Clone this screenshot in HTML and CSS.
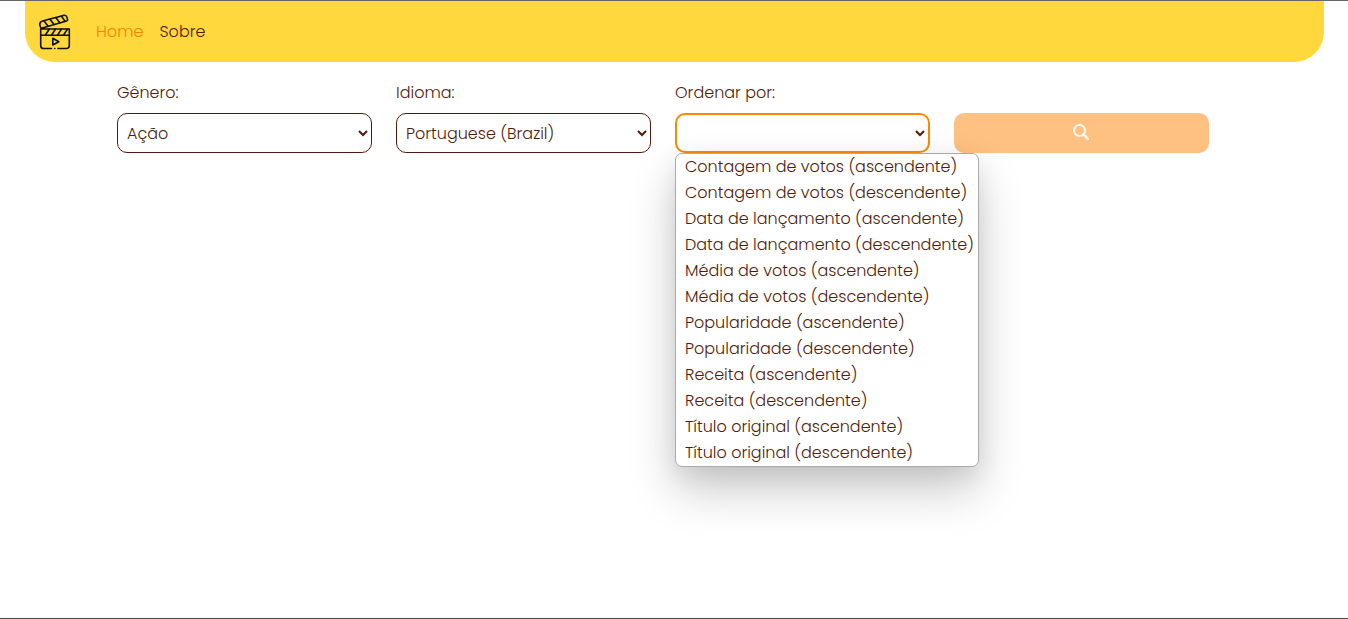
FILE: index.html
```html
<!DOCTYPE html>
<html lang="pt-BR">
<head>
  <meta charset="utf-8">
  <meta name="viewport" content="width=device-width, initial-scale=1">
  <title>Filmes</title>
  <link rel="stylesheet" href="styles.css">
</head>
<body>
  <header class="navbar">
    <a class="brand" href="#" aria-label="Início">
      <svg class="brand-icon" viewBox="0 0 34 36" fill="none" stroke="currentColor" stroke-width="1.6" stroke-linecap="round" stroke-linejoin="round">
        <path d="M3.6 14.2Q2.3 13.6 1.9 11.4 1.3 8 4.4 7L25.5 1.4Q28.3.9 29 3.4L29.5 5.3Q29.8 6.6 28.5 7.1L3.6 14.2M2.7 15V31.4Q2.7 34.5 5.8 34.5H13.5M20 34.5H28.3Q31.3 34.5 31.3 31.5V15H2.7M2.7 21.2H31.3"/>
        <path d="M6 6.8 10 12.2M12 5.2 16 10.5M17.8 3.6 21.8 8.8M23.4 2.1 27 7.3M11.2 15.2 7.4 21M17.4 15.2 13.6 21M23.4 15.2 19.6 21M29.4 15.2 25.6 21"/>
        <path d="M14.8 24.3V31L20.8 27.7ZM16.7 34.5H16.8"/>
      </svg>
    </a>
    <nav class="nav">
      <a class="nav-link active" href="#" aria-current="page">Home</a>
      <a class="nav-link" href="#">Sobre</a>
    </nav>
  </header>

  <main>
    <form class="filters">
      <div class="field">
        <label for="genero">Gênero:</label>
        <select id="genero" class="select"><option>Ação</option></select>
      </div>
      <div class="field">
        <label for="idioma">Idioma:</label>
        <select id="idioma" class="select"><option>Portuguese (Brazil)</option></select>
      </div>
      <div class="field">
        <label for="ordem">Ordenar por:</label>
        <select id="ordem" class="select open"><option></option></select>
        <ul class="menu" role="listbox" aria-label="Ordenar por">
          <li role="option">Contagem de votos (ascendente)</li>
          <li role="option">Contagem de votos (descendente)</li>
          <li role="option">Data de lançamento (ascendente)</li>
          <li role="option">Data de lançamento (descendente)</li>
          <li role="option">Média de votos (ascendente)</li>
          <li role="option">Média de votos (descendente)</li>
          <li role="option">Popularidade (ascendente)</li>
          <li role="option">Popularidade (descendente)</li>
          <li role="option">Receita (ascendente)</li>
          <li role="option">Receita (descendente)</li>
          <li role="option">Título original (ascendente)</li>
          <li role="option">Título original (descendente)</li>
        </ul>
      </div>
      <button class="search" type="submit" disabled aria-label="Buscar">
        <svg class="search-icon" viewBox="0 0 16 16" fill="none" stroke="currentColor">
          <circle cx="6.5" cy="6.5" r="5.5" stroke-width="2"/>
          <path d="M10.7 10.7 14.8 14.8" stroke-width="2.4" stroke-linecap="round"/>
        </svg>
      </button>
    </form>
  </main>
</body>
</html>
```
FILE: styles.css
```css
* {
  box-sizing: border-box;
}

body {
  min-height: 100vh;
  margin: 0;
  border-top: 1px solid #646469;
  border-bottom: 1px solid #46464b;
  background: #fff;
  color: #4f1c0c;
  font-family: Poppins, Inter, sans-serif;
  font-size: 16px;
  font-weight: 300;
  line-height: 24px;
}

.navbar {
  display: flex;
  align-items: center;
  gap: 16px;
  height: 61px;
  margin: 0 24px 0 25px;
  padding: 0 13px;
  border-radius: 0 0 30px 30px;
  background: #ffd83d;
}

.brand {
  display: flex;
  color: #111105;
}

.brand-icon {
  width: 34px;
  height: 36px;
}

.nav {
  display: flex;
}

.nav-link {
  padding: 8px;
  color: inherit;
  text-decoration: none;
}

.nav-link.active {
  color: #ff8000;
}

.filters {
  display: grid;
  grid-template-columns: repeat(4, minmax(0, 1fr));
  gap: 24px;
  align-items: end;
  margin: 19px 139px 0 117px;
}

.field {
  display: flex;
  flex-direction: column;
  gap: 8px;
  position: relative;
}

.select {
  width: 100%;
  height: 40px;
  padding: 0 5px;
  border: 1px solid #4f1c0c;
  border-radius: 10px;
  background: #fff;
  color: inherit;
  font: inherit;
}

.select.open {
  border: 2px solid #ff8800;
  outline: none;
}

.menu {
  position: absolute;
  top: 100%;
  left: 0;
  z-index: 1;
  margin: 0;
  padding: 0;
  border: 1px solid #aaa;
  border-radius: 7px;
  background: #fff;
  box-shadow: 0 24px 48px rgb(0 0 0 / 20%), 0 8px 24px rgb(0 0 0 / 8%);
  list-style: none;
  white-space: nowrap;
}

.menu li {
  padding: 0 4px 0 9px;
  line-height: 26px;
}

.search {
  display: flex;
  align-items: center;
  justify-content: center;
  height: 40px;
  padding: 0 2px 2px 0;
  border: 0;
  border-radius: 10px;
  background: #ffc181;
  color: #fff8f0;
}

.search-icon {
  width: 16px;
  height: 16px;
}
```
